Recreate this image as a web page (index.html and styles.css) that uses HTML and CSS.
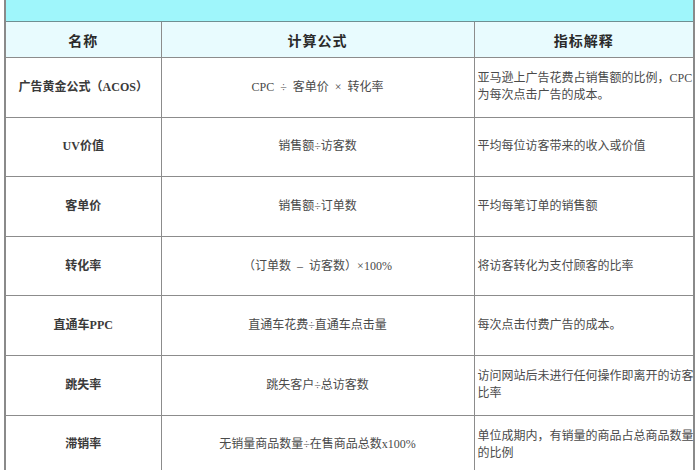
FILE: index.html
```html
<!DOCTYPE html>
<html lang="zh-CN">
<head>
<meta charset="utf-8">
<link rel="stylesheet" href="styles.css">
</head>
<body>
<div class="sheet">
  <div class="banner"></div>
  <table class="grid">
    <colgroup>
      <col class="c1"><col class="c2"><col class="c3">
    </colgroup>
    <thead>
      <tr class="head">
        <th>名称</th>
        <th>计算公式</th>
        <th>指标解释</th>
      </tr>
    </thead>
    <tbody>
      <tr>
        <td class="name">广告黄金公式（ACOS）</td>
        <td class="formula">CPC&nbsp; ÷&nbsp; 客单价&nbsp; ×&nbsp; 转化率</td>
        <td class="desc">亚马逊上广告花费占销售额的比例，CPC<br>为每次点击广告的成本。</td>
      </tr>
      <tr>
        <td class="name">UV价值</td>
        <td class="formula">销售额÷访客数</td>
        <td class="desc">平均每位访客带来的收入或价值</td>
      </tr>
      <tr>
        <td class="name">客单价</td>
        <td class="formula">销售额÷订单数</td>
        <td class="desc">平均每笔订单的销售额</td>
      </tr>
      <tr>
        <td class="name">转化率</td>
        <td class="formula">（订单数&nbsp; –&nbsp; 访客数）×100%</td>
        <td class="desc">将访客转化为支付顾客的比率</td>
      </tr>
      <tr>
        <td class="name">直通车PPC</td>
        <td class="formula">直通车花费÷直通车点击量</td>
        <td class="desc">每次点击付费广告的成本。</td>
      </tr>
      <tr>
        <td class="name">跳失率</td>
        <td class="formula">跳失客户÷总访客数</td>
        <td class="desc">访问网站后未进行任何操作即离开的访客<br>比率</td>
      </tr>
      <tr>
        <td class="name">滞销率</td>
        <td class="formula">无销量商品数量÷在售商品总数x100%</td>
        <td class="desc">单位成期内，有销量的商品占总商品数量<br>的比例</td>
      </tr>
    </tbody>
  </table>
</div>
</body>
</html>
```
FILE: styles.css
```css
html, body {
  margin: 0;
  padding: 0;
  background: #ffffff;
}

body {
  font-family: "Liberation Serif", "Noto Sans CJK SC", serif;
  color: #3a3a3a;
}

.sheet {
  margin-left: 4px;
  width: 691px;
  border-left: 2px solid #8a8a8a;
  border-right: 2px solid #8a8a8a;
  box-sizing: border-box;
}

.banner {
  height: 21px;
  background: #9ff6fb;
  border-bottom: 1px solid #6f8f92;
}

.grid {
  width: 100%;
  border-collapse: collapse;
  table-layout: fixed;
}

.c1 { width: 155px; }
.c2 { width: 313px; }
.c3 { width: auto; }

.grid th,
.grid td {
  border: 1px solid #8c8c8c;
  border-top: none;
  padding: 0;
}

.grid tr > :first-child { border-left: none; }
.grid tr > :last-child { border-right: none; }

.head th {
  height: 35px;
  background: #e8fbfe;
  font-family: "Liberation Serif", "Noto Sans CJK SC", serif;
  font-weight: 700;
  font-size: 14px;
  color: #2a2a2a;
  text-align: center;
  vertical-align: middle;
  letter-spacing: 1px;
}

.grid tbody td {
  height: 58.6px;
  vertical-align: middle;
  font-size: 12px;
  line-height: 17px;
}

.name {
  text-align: center;
  font-weight: 600;
  color: #3a3a3a;
}

.formula {
  text-align: center;
  color: #4a4a4a;
}

.desc {
  text-align: left;
  padding-left: 3px !important;
  color: #4a4a4a;
  white-space: nowrap;
}
```
